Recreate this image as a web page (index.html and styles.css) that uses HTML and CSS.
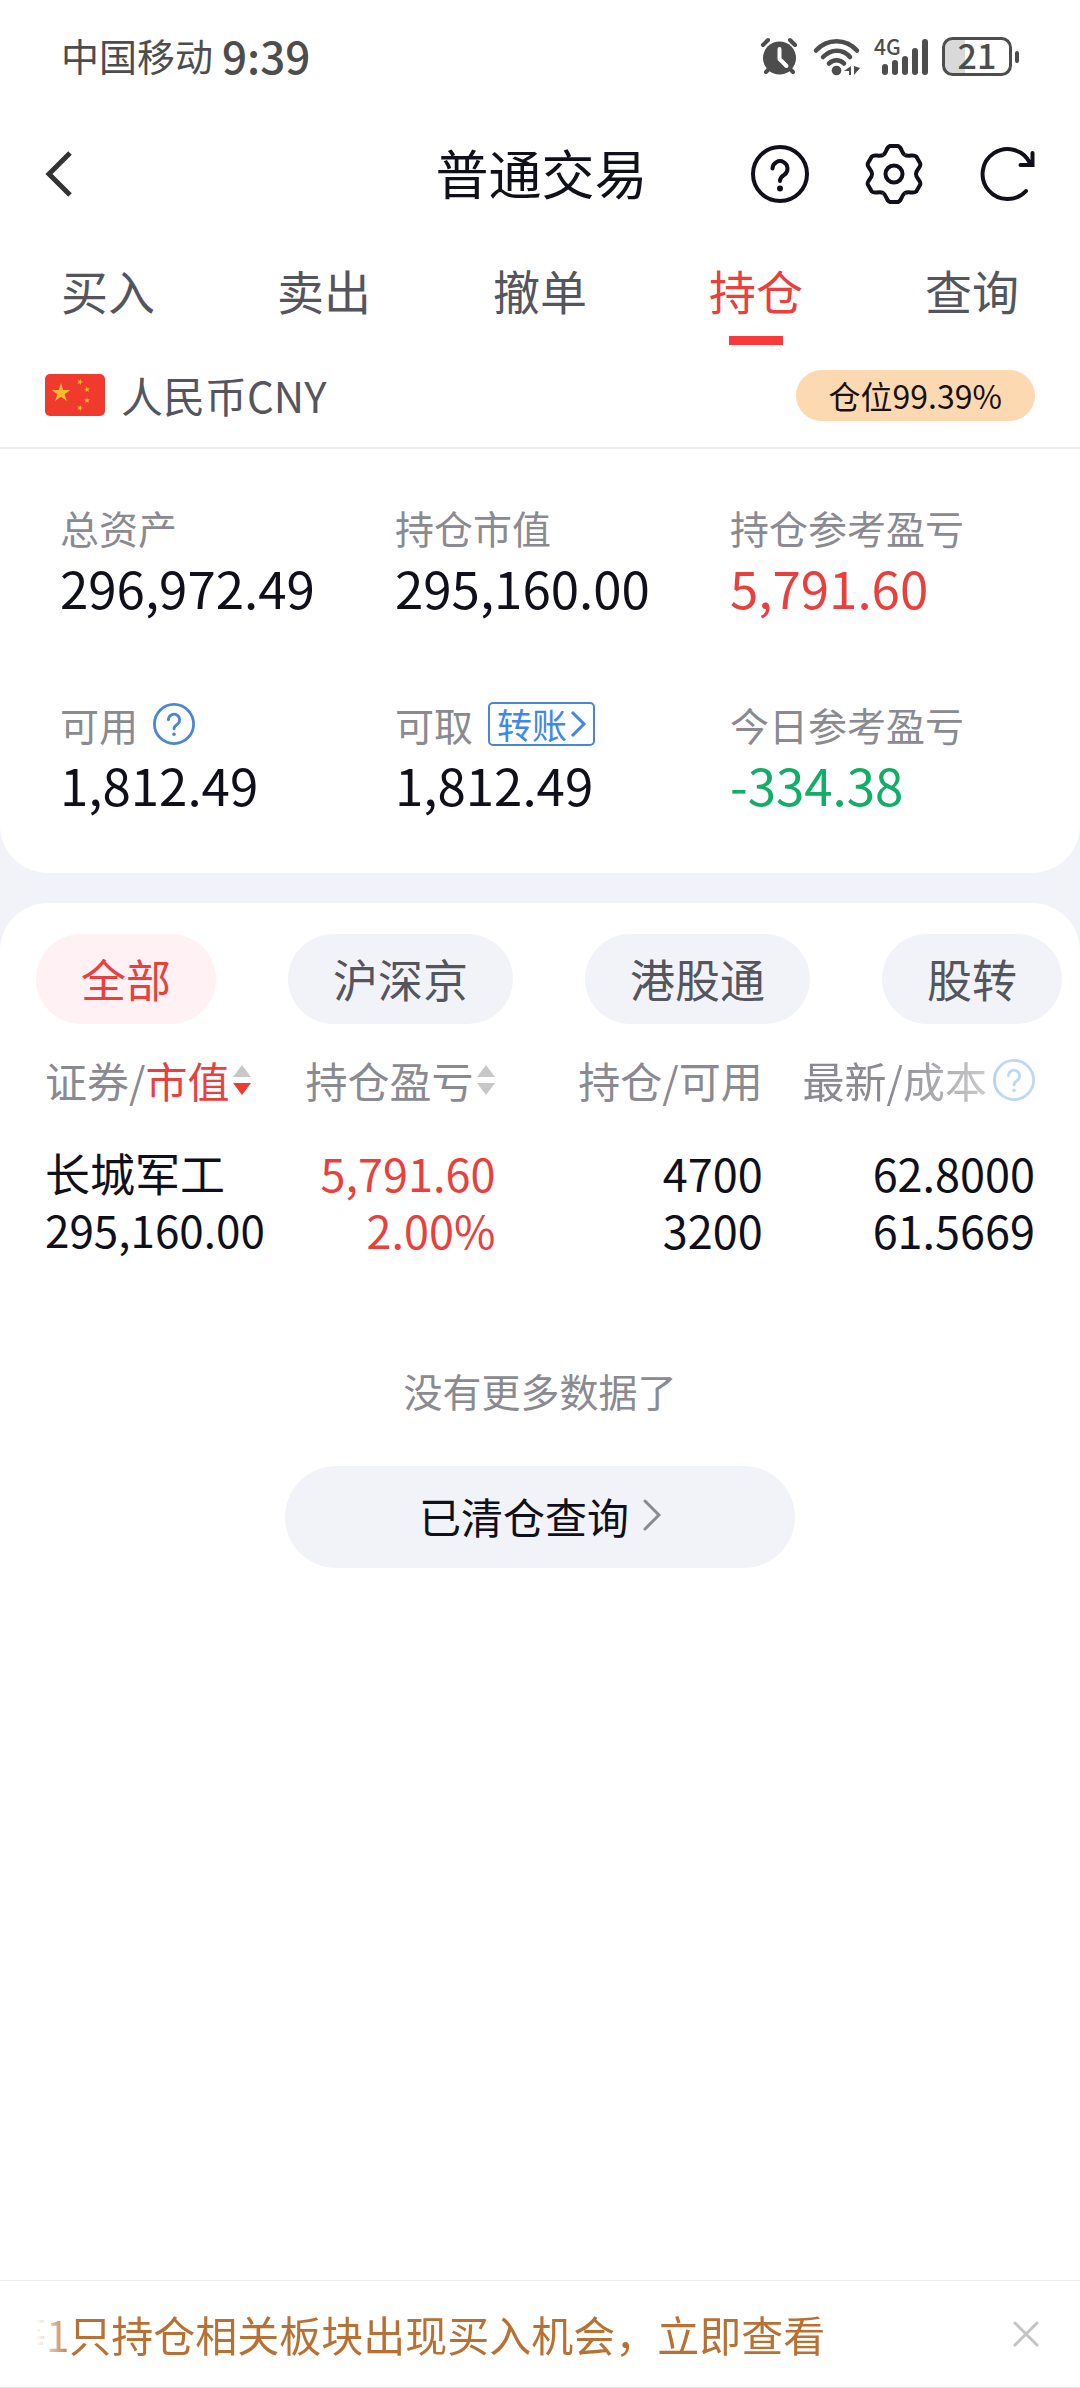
FILE: index.html
```html
<!DOCTYPE html>
<html lang="zh-CN">
<head>
  <meta charset="UTF-8" />
  <meta name="viewport" content="width=device-width, initial-scale=1" />
  <title>普通交易</title>
  <link rel="stylesheet" href="styles.css">
</head>
<body>

<div class="status-bar">
  <div class="status-left">
    <span class="carrier">中国移动</span>
    <span class="time">9:39</span>
  </div>
  <div class="status-icons">
    <svg width="40" height="60" viewBox="0 -8 40 60" aria-hidden="true">
      <g fill="none" stroke="#4d4d4d" stroke-width="4" stroke-linecap="round">
        <path d="M4 10l5-5M36 10l-5-5M7 37l5-5M34 37l-5-5" />
      </g>
      <circle cx="20.500" cy="23" r="16.500" fill="#4d4d4d" />
      <path d="M20.500 14v10l7 7" fill="none" stroke="#fff" stroke-width="4" stroke-linecap="round" stroke-linejoin="round" />
    </svg>
    <svg width="50" height="60" viewBox="0 -8 50 60" aria-hidden="true">
      <g fill="none" stroke="#4d4d4d" stroke-width="4.500" stroke-linecap="round">
        <path d="M5 15.500c11-12.500 30-12.500 41 0M12 22c8-8.500 20-8.500 27 0M18 28.500c4-4.500 11-4.500 15 0" />
      </g>
      <circle cx="25.500" cy="35.500" r="4.800" fill="#4d4d4d" />
      <path d="M33 36l7-5v9h-2v-4zM49 33l-6 7v-9z" fill="#4d4d4d" />
    </svg>
    <svg width="56" height="60" viewBox="0 -8 56 60" aria-hidden="true">
      <text x="1" y="20" class="net">4G</text>
      <g stroke="#4d4d4d" stroke-width="6" stroke-linecap="round">
        <path d="M12 32v5M22 28v9M32 24v13M42 16v21M52 7v30" />
      </g>
    </svg>
    <svg width="80" height="60" viewBox="0 -8 80 60" aria-hidden="true">
      <path d="M24 4H11a8 8 0 0 0-8 8v19a8 8 0 0 0 8 8h13z" fill="#d9d9d9" />
      <rect x="2.500" y="3.500" width="67" height="36" rx="9" fill="none" stroke="#4d4d4d" stroke-width="3" />
      <path d="M76 18v8" stroke="#4d4d4d" stroke-width="4" stroke-linecap="round" />
      <text x="36" y="34" text-anchor="middle" class="battery-level">21</text>
    </svg>
  </div>
</div>

<header class="nav-bar">
  <button class="icon-btn back" aria-label="返回">
    <svg width="30" height="48" viewBox="0 0 30 48"><path d="M25 3L4 24l21 21" fill="none" stroke="#333" stroke-width="5" /></svg>
  </button>
  <h1>普通交易</h1>
  <div class="nav-actions">
    <button class="icon-btn" aria-label="帮助">
      <svg width="60" height="60" viewBox="-30 -30 60 60" fill="none" stroke="#10101a" stroke-width="4" stroke-linecap="round">
        <circle r="27" />
        <path d="M-7.500-5.500a7.500 7.500 0 1 1 11.500 6.500c-2.500 1.500-4 3-4 6" />
        <circle cy="14.500" r="3" fill="#10101a" stroke="none" />
      </svg>
    </button>
    <button class="icon-btn" aria-label="设置">
      <svg width="60" height="60" viewBox="-30 -30 60 60" fill="none" stroke="#10101a" stroke-width="4">
        <path id="tooth" d="M-11-19C-7-21-8-27-4-28H4C8-27 7-21 11-19" />
        <use href="#tooth" transform="rotate(60)" />
        <use href="#tooth" transform="rotate(120)" />
        <use href="#tooth" transform="rotate(180)" />
        <use href="#tooth" transform="rotate(240)" />
        <use href="#tooth" transform="rotate(300)" />
        <circle r="8.500" />
      </svg>
    </button>
    <button class="icon-btn" aria-label="刷新">
      <svg width="60" height="60" viewBox="-30 -30 60 60" fill="none" stroke="#10101a" stroke-width="4" stroke-linecap="round">
        <path d="M18 17A25 25 0 1 1 22-11M24.500-21v12h-12" />
      </svg>
    </button>
  </div>
</header>

<nav class="tabs">
  <a href="#buy">买入</a>
  <a href="#sell">卖出</a>
  <a href="#cancel">撤单</a>
  <a href="#position" class="active" aria-current="page">持仓</a>
  <a href="#query">查询</a>
</nav>

<main>
  <section class="account">
    <div class="currency">
      <svg class="flag" width="60" height="42" viewBox="0 0 60 42" aria-hidden="true">
        <defs>
          <polygon id="star" points="0,-10 2.200,-3.100 9.500,-3.100 3.600,1.200 5.900,8.100 0,3.800 -5.900,8.100 -3.600,1.200 -9.500,-3.100 -2.200,-3.100" />
        </defs>
        <rect width="60" height="42" rx="5" fill="#f03a2e" />
        <g fill="#fbb831">
          <use href="#star" transform="translate(16 19)" />
          <use href="#star" transform="translate(35 8) rotate(20) scale(.32)" />
          <use href="#star" transform="translate(42 15.500) rotate(-10) scale(.32)" />
          <use href="#star" transform="translate(42 26.500) scale(.32)" />
          <use href="#star" transform="translate(35 34) rotate(20) scale(.32)" />
        </g>
      </svg>
      <span>人民币CNY</span>
      <span class="ratio">仓位99.39%</span>
    </div>

    <dl class="stats">
      <div>
        <dt>总资产</dt>
        <dd>296,972.49</dd>
      </div>
      <div>
        <dt>持仓市值</dt>
        <dd>295,160.00</dd>
      </div>
      <div>
        <dt>持仓参考盈亏</dt>
        <dd class="up">5,791.60</dd>
      </div>
      <div>
        <dt>可用
          <button class="icon-btn" aria-label="可用说明">
            <svg width="42" height="42" viewBox="-30 -30 60 60" fill="none" stroke="#4a86d2" stroke-width="4" stroke-linecap="round">
              <circle r="28" />
              <path d="M-8-6a8 8 0 1 1 12 7c-2.500 1.500-4 3-4 6" />
              <circle cy="14.500" r="2.500" fill="#4a86d2" stroke="none" />
            </svg>
          </button>
        </dt>
        <dd>1,812.49</dd>
      </div>
      <div>
        <dt>可取
          <button class="transfer">转账<svg width="18" height="32" viewBox="0 0 18 32" aria-hidden="true"><path d="M2 4l12 12L2 28" fill="none" stroke="#3f87e8" stroke-width="3" /></svg></button>
        </dt>
        <dd>1,812.49</dd>
      </div>
      <div>
        <dt>今日参考盈亏</dt>
        <dd class="down">-334.38</dd>
      </div>
    </dl>
  </section>

  <section class="positions">
    <div class="chips">
      <button class="chip active">全部</button>
      <button class="chip">沪深京</button>
      <button class="chip">港股通</button>
      <button class="chip">股转</button>
    </div>

    <table class="holdings">
      <thead>
        <tr>
          <th scope="col">
            <button class="sort">证券/<span class="sorted">市值</span><svg width="18" height="32" viewBox="0 0 18 32" aria-hidden="true"><path d="M0 13L9 1l9 12z" fill="#c8c8c8" /><path d="M0 19l9 12 9-12z" fill="#f03a2e" /></svg></button>
          </th>
          <th scope="col">
            <button class="sort">持仓盈亏<svg width="18" height="32" viewBox="0 0 18 32" aria-hidden="true"><path d="M0 13L9 1l9 12zM0 19l9 12 9-12z" fill="#c8c8c8" /></svg></button>
          </th>
          <th scope="col">持仓/可用</th>
          <th scope="col">
            <div class="fade">最新/成本
              <button class="icon-btn" aria-label="成本说明">
                <svg width="42" height="42" viewBox="-30 -30 60 60" fill="none" stroke="#4a8ee8" stroke-width="4" stroke-linecap="round">
                  <circle r="28" />
                  <path d="M-8-6a8 8 0 1 1 12 7c-2.500 1.500-4 3-4 6" />
                  <circle cy="14.500" r="2.500" fill="#4a8ee8" stroke="none" />
                </svg>
              </button>
            </div>
          </th>
        </tr>
      </thead>
      <tbody>
        <tr>
          <td><span class="name">长城军工</span><span class="amount">295,160.00</span></td>
          <td class="up"><span>5,791.60</span><span>2.00%</span></td>
          <td><span>4700</span><span>3200</span></td>
          <td><span>62.8000</span><span>61.5669</span></td>
        </tr>
      </tbody>
    </table>

    <p class="no-more">没有更多数据了</p>
    <button class="cleared">已清仓查询<svg width="18" height="34" viewBox="0 0 18 34" aria-hidden="true"><path d="M2 3l14 14L2 31" fill="none" stroke="#8a8a90" stroke-width="3" stroke-linecap="round" /></svg></button>
  </section>
</main>

<footer class="notice">
  <a href="#chance" class="notice-text"><span>等1只持仓相关板块出现买入机会，立即查看</span></a>
  <button class="icon-btn" aria-label="关闭">
    <svg width="28" height="28" viewBox="0 0 28 28"><path d="M3 3l22 22M25 3L3 25" fill="none" stroke="#c4c4c6" stroke-width="3" stroke-linecap="round" /></svg>
  </button>
</footer>

</body>
</html>
```

FILE: styles.css
```css
* {
  box-sizing: border-box;
}

body {
  margin: 0;
  min-height: 100vh;
  display: flex;
  flex-direction: column;
  font-family: "Noto Sans CJK SC", sans-serif;
  background: #fff;
  color: #10101a;
}

button {
  font-family: inherit;
  color: inherit;
  border: none;
  background: none;
  padding: 0;
  cursor: pointer;
}

a {
  color: inherit;
  text-decoration: none;
}

svg {
  display: block;
  flex: none;
}

.icon-btn {
  display: block;
}

.up {
  color: #e93f3d;
}

.down {
  color: #12ad66;
}

/* phone status bar */
.status-bar {
  height: 114px;
  padding: 0 59px 0 61px;
  display: flex;
  justify-content: space-between;
  align-items: center;
  color: #4d4d4d;
}

.status-left {
  display: flex;
  align-items: center;
  gap: 9px;
  padding-bottom: 4px;
  line-height: 56px;
}

.carrier {
  font-size: 38px;
}

.time {
  font-size: 44px;
  font-weight: 500;
}

.status-icons {
  display: flex;
  gap: 12px;
}

.net {
  font-size: 21px;
  font-weight: 500;
  fill: #4d4d4d;
}

.battery-level {
  font-size: 34px;
  font-weight: 500;
  fill: #4d4d4d;
}

/* title bar */
.nav-bar {
  height: 120px;
  padding: 0 42px 0 45px;
  display: grid;
  grid-template-columns: 1fr auto 1fr;
  align-items: center;
}

.nav-bar h1 {
  margin: 0;
  padding-bottom: 4px;
  font-size: 53px;
  line-height: 80px;
  font-weight: 400;
}

.nav-actions {
  display: flex;
  justify-content: flex-end;
  gap: 54px;
}

.tabs {
  display: grid;
  grid-template-columns: repeat(5, 1fr);
  padding-top: 26px;
  font-size: 47px;
  line-height: 60px;
  text-align: center;
  color: #55555d;
}

.tabs a::after {
  content: '';
  display: block;
  width: 54px;
  height: 9px;
  margin: 16px auto 0;
}

.tabs .active {
  color: #e93f3d;
}

.tabs .active::after {
  background: #fa3a3a;
}

main {
  flex: 1;
  display: flex;
  flex-direction: column;
  gap: 30px;
  background: #f2f3f8;
}

.account {
  background: #fff;
  border-radius: 0 0 48px 48px;
}

.currency {
  height: 104px;
  padding: 0 45px 2px;
  display: flex;
  align-items: center;
  gap: 16px;
  border-bottom: 2px solid #ebebed;
  font-size: 42px;
  line-height: 60px;
  color: #55555d;
}

.ratio {
  margin-left: auto;
  padding: 0 33px;
  border-radius: 26px;
  background: #fdd9b2;
  color: #1a1010;
  font-size: 32px;
  line-height: 51px;
}

.stats {
  margin: 0;
  padding: 52px 15px 57px 60px;
  display: grid;
  grid-template-columns: repeat(3, 1fr);
  row-gap: 79px;
}

.stats dt {
  display: flex;
  align-items: center;
  gap: 15px;
  height: 52px;
  font-size: 39px;
  color: #8a8a90;
}

.stats dd {
  margin: 2px 0 0;
  font-size: 51px;
  line-height: 64px;
}

.transfer {
  display: flex;
  align-items: center;
  gap: 3px;
  height: 44px;
  padding: 0 5px 0 7px;
  border: 2px solid #4a86d2;
  border-radius: 5px;
  color: #3f87e8;
  font-size: 35px;
  line-height: 40px;
}

/* positions card */
.positions {
  flex: 1;
  padding-top: 31px;
  background: #fff;
  border-radius: 48px 48px 0 0;
}

.chips {
  display: flex;
  justify-content: space-between;
  padding: 0 18px 0 36px;
}

.chip {
  padding: 0 45px;
  border-radius: 45px;
  background: #f2f3f8;
  color: #55555d;
  font-size: 45px;
  line-height: 90px;
}

.chip.active {
  background: #fff1f4;
  color: #e93f3d;
}

.holdings {
  width: calc(100% - 90px);
  margin: 26px 45px 0;
  table-layout: fixed;
  border-collapse: collapse;
}

.holdings th,
.holdings td {
  padding: 0 5px 0 0;
  text-align: right;
  white-space: nowrap;
}

.holdings th:first-child,
.holdings td:first-child {
  width: 24%;
  text-align: left;
}

.holdings th:last-child,
.holdings td:last-child {
  padding-right: 0;
}

.holdings th:nth-child(2) {
  width: 22%;
}

.holdings th:nth-child(3) {
  width: 27%;
}

.holdings th {
  height: 60px;
  font-size: 42px;
  line-height: 60px;
  font-weight: 400;
  color: #8a8a90;
}

.sort {
  display: inline-flex;
  align-items: center;
  vertical-align: top;
  font-size: 42px;
  line-height: 60px;
}

.sort svg {
  margin-left: 4px;
}

.sorted {
  color: #e93f3d;
}

.fade {
  display: flex;
  align-items: center;
  justify-content: flex-end;
  gap: 6px;
  mask-image: linear-gradient(to right, #000 45%, rgba(0, 0, 0, 0.35) 88%);
}

.holdings td {
  padding-top: 34px;
  font-size: 45px;
  line-height: 57px;
}

.holdings td span {
  display: block;
}

.holdings .amount {
  font-size: 44px;
}

.no-more {
  margin: 107px 0 51px;
  text-align: center;
  font-size: 39px;
  line-height: 50px;
  color: #8a8a90;
}

.cleared {
  display: flex;
  align-items: center;
  justify-content: center;
  gap: 14px;
  width: 510px;
  height: 102px;
  margin: 0 auto;
  padding-bottom: 4px;
  border-radius: 51px;
  background: #f2f3f8;
  font-size: 42px;
}

/* bottom notice */
.notice {
  display: flex;
  align-items: center;
  justify-content: space-between;
  padding: 0 40px 0 36px;
  border-top: 1px solid #ebebed;
  border-bottom: 1px solid #ebebed;
}

.notice-text {
  flex: 1;
  overflow: hidden;
  white-space: nowrap;
  font-size: 42px;
  line-height: 106px;
  color: #b87033;
  mask-image: linear-gradient(to right, transparent, #000 36px);
}

.notice-text span {
  margin-left: -32px;
}
```
